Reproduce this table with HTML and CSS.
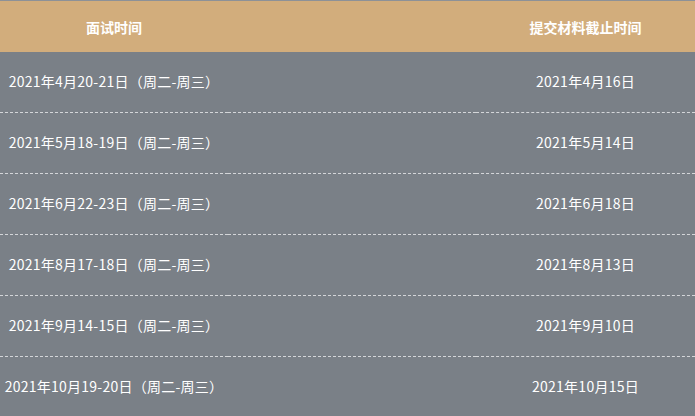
FILE: index.html
```html
<!DOCTYPE html>
<html lang="zh">
<head>
<meta charset="utf-8">
<link rel="stylesheet" href="styles.css">
</head>
<body>
<table class="schedule">
  <colgroup>
    <col class="c1"><col class="c2"><col class="c3">
  </colgroup>
  <thead>
    <tr><th>面试时间</th><th></th><th>提交材料截止时间</th></tr>
  </thead>
  <tbody>
    <tr><td>2021年4月20-21日（周二-周三）</td><td></td><td>2021年4月16日</td></tr>
    <tr><td>2021年5月18-19日（周二-周三）</td><td></td><td>2021年5月14日</td></tr>
    <tr><td>2021年6月22-23日（周二-周三）</td><td></td><td>2021年6月18日</td></tr>
    <tr><td>2021年8月17-18日（周二-周三）</td><td></td><td>2021年8月13日</td></tr>
    <tr><td>2021年9月14-15日（周二-周三）</td><td></td><td>2021年9月10日</td></tr>
    <tr><td>2021年10月19-20日（周二-周三）</td><td></td><td>2021年10月15日</td></tr>
  </tbody>
</table>
</body>
</html>
```
FILE: styles.css
```css
html, body {
  margin: 0;
  padding: 0;
  background: #7a8087;
}
body {
  border-top: 1px solid #8d9197;
  font-family: "Noto Sans CJK SC", "Noto Sans", sans-serif;
  font-size: 14px;
  color: #ffffff;
}
.schedule {
  width: 100%;
  border-collapse: collapse;
  table-layout: fixed;
}
.c1 { width: 228px; }
.c3 { width: 219px; }
.schedule th {
  background: #d2ad7c;
  height: 51px;
  padding: 0;
  font-weight: bold;
  text-align: center;
  vertical-align: middle;
}
.schedule td {
  height: 58px;
  padding: 0 0 2px;
  text-align: center;
  vertical-align: middle;
  white-space: nowrap;
  letter-spacing: 0.25px;
  border-bottom: 1px dashed #d4d6d9;
}
.schedule tbody tr:last-child td {
  border-bottom: none;
}
```
